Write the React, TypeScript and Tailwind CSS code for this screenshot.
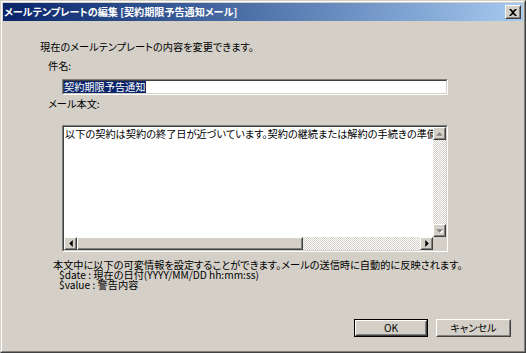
const font = "font-['Noto_Sans_CJK_JP',sans-serif] [font-feature-settings:'palt']";

const Raised = ({ className = '', children }: { className?: string; children?: React.ReactNode }) => (
  <div className={`border border-t-white border-l-white border-r-[#404040] border-b-[#404040] bg-[#d4d0c8] ${className}`}>
    <div className="w-full h-full border border-t-[#d4d0c8] border-l-[#d4d0c8] border-r-[#808080] border-b-[#808080] flex items-center justify-center">
      {children}
    </div>
  </div>
);

const Arrow = ({ dir, disabled }: { dir: 'up' | 'down' | 'left' | 'right'; disabled?: boolean }) => {
  const pts = {
    up: '0,3 3,0 6,3',
    down: '0,0 6,0 3,3',
    left: '3,0 3,6 0,3',
    right: '0,0 0,6 3,3',
  }[dir];
  const vertical = dir === 'up' || dir === 'down';
  return (
    <svg width={vertical ? 7 : 4} height={vertical ? 4 : 7} viewBox={vertical ? '0 0 6 3' : '0 0 3 6'}>
      {disabled && <polygon points={pts} fill="#ffffff" transform="translate(1,1)" />}
      <polygon points={pts} fill={disabled ? '#808080' : '#000000'} />
    </svg>
  );
};

const dither = 'bg-[repeating-conic-gradient(#ffffff_0%_25%,#d4d0c8_0%_50%)] bg-[length:2px_2px]';

export default function App() {
  return (
    <div className={`w-[526px] h-[353px] bg-[#d4d0c8] text-black text-[10.2px] ${font}`}>
      {/* Window frame */}
      <div className="w-full h-full border border-t-[#d4d0c8] border-l-[#d4d0c8] border-r-[#404040] border-b-[#404040]">
        <div className="w-full h-full border border-t-white border-l-white border-r-[#808080] border-b-[#808080] p-px flex flex-col">
          {/* Title bar */}
          <div className="h-[18px] bg-gradient-to-r from-[#0a246a] to-[#a6caf0] flex items-center justify-between pl-[1px] pr-[2px]">
            <span className="text-white font-bold text-[10.1px] leading-[18px] whitespace-nowrap">
              メールテンプレートの編集 [契約期限予告通知メール]
            </span>
            <Raised className="w-[16px] h-[14px]">
              <svg width="8" height="7" viewBox="0 0 8 7">
                <path d="M0 0h2l2 2 2-2h2L5 3.5 8 7H6L4 5 2 7H0l3-3.5z" fill="#000" />
              </svg>
            </Raised>
          </div>

          {/* Body */}
          <div className="flex flex-col">
            <div className="ml-[37px] mt-[20px] h-[12px] leading-[12px] whitespace-nowrap">
              現在のメールテンプレートの内容を変更できます。
            </div>
            <div className="ml-[45px] mt-[7px] h-[12px] leading-[12px]">件名:</div>

            {/* Subject input */}
            <div className="ml-[59px] mt-[7px] w-[386px] h-[16px] border border-t-[#808080] border-l-[#808080] border-r-white border-b-white">
              <div className="w-full h-full border border-t-[#404040] border-l-[#404040] border-r-[#d4d0c8] border-b-[#d4d0c8] bg-white flex items-center">
                <span className="bg-[#0a246a] text-white h-[12px] leading-[12px] whitespace-nowrap">契約期限予告通知</span>
              </div>
            </div>

            <div className="ml-[45px] mt-[3px] h-[12px] leading-[12px]">メール本文:</div>

            {/* Body textarea */}
            <div className="ml-[59px] mt-[15px] w-[386px] h-[127px] border border-t-[#808080] border-l-[#808080] border-r-white border-b-white">
              <div className="w-full h-full border border-t-[#404040] border-l-[#404040] border-r-[#d4d0c8] border-b-[#d4d0c8] bg-white grid grid-cols-[1fr_13px] grid-rows-[1fr_13px]">
                <div className="overflow-hidden whitespace-nowrap pl-px pt-px leading-[12px]">
                  以下の契約は契約の終了日が近づいています。契約の継続または解約の手続きの準備をお願いします。
                </div>
                {/* Vertical scrollbar (disabled) */}
                <div className="flex flex-col">
                  <Raised className="w-[13px] h-[13px]">
                    <Arrow dir="up" disabled />
                  </Raised>
                  <div className={`flex-1 ${dither}`} />
                  <Raised className="w-[13px] h-[13px]">
                    <Arrow dir="down" disabled />
                  </Raised>
                </div>
                {/* Horizontal scrollbar */}
                <div className="flex">
                  <Raised className="w-[13px] h-[13px]">
                    <Arrow dir="left" />
                  </Raised>
                  <Raised className="w-[226px] h-[13px]" />
                  <div className={`flex-1 ${dither}`} />
                  <Raised className="w-[13px] h-[13px]">
                    <Arrow dir="right" />
                  </Raised>
                </div>
                <div className="bg-[#d4d0c8]" />
              </div>
            </div>

            {/* Notes */}
            <div className="ml-[50px] mt-[8px] text-[10.2px] leading-[10px] whitespace-nowrap">
              <div>本文中に以下の可変情報を設定することができます。メールの送信時に自動的に反映されます。</div>
              <div className="ml-[6px]">$date : 現在の日付(YYYY/MM/DD hh:mm:ss)</div>
              <div className="ml-[6px]">$value : 警告内容</div>
            </div>

            {/* Buttons */}
            <div className="mt-[29px] flex justify-end gap-[8px] pr-[12px]">
              <div className="w-[74px] h-[18px] border border-black">
                <Raised className="w-full h-full">OK</Raised>
              </div>
              <Raised className="w-[75px] h-[18px]">キャンセル</Raised>
            </div>
          </div>
        </div>
      </div>
    </div>
  );
}
